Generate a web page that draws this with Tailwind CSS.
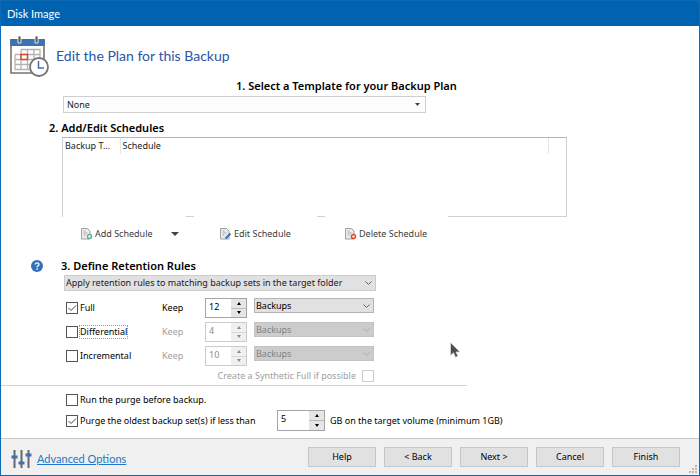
<!DOCTYPE html>
<html lang="en">
<head>
    <meta charset="UTF-8" />
    <meta name="viewport" content="width=device-width, initial-scale=1.0"/>
    <title>Disk Image</title>
    <script src="https://cdn.jsdelivr.net/npm/@tailwindcss/browser@4"></script>
</head>
<body class="min-h-screen flex flex-col bg-white border border-[#0f6ab4] font-['Noto_Sans',sans-serif] text-[9px] leading-3 text-[#1a1a1a]">

    <header class="h-[25px] px-1.5 flex items-center bg-[#0063b1] text-white font-['Lato',sans-serif] text-[11px]">Disk Image</header>

    <main class="grow pt-2">
        <div class="flex items-center gap-[7px] pl-2">
            <svg class="w-10 h-11" viewBox="0 0 40 44">
                <path d="M2 6h33v33H2z" fill="#fff" stroke="#757575" stroke-width="1.6"/>
                <path d="M1.200 5h34.600v7H1.200z" fill="#3c72b4"/>
                <path d="M9 2h3v7H9zM26 2h3v7h-3z" fill="#5c5c5c" stroke="#fff" stroke-width=".8"/>
                <path d="M12 15.500h19v15M6 20.500h25M6 20.500v15h18M6 25.500h25M6 30.500h25M12 15.500v20M18.500 15.500v20M25 15.500v15" fill="none" stroke="#b3b3b3" stroke-width="1.300"/>
                <path d="M12 20.500h6.500v5H12z" fill="#fff" stroke="#d8482c" stroke-width="1.500"/>
                <circle cx="30" cy="33" r="9" fill="#fff" stroke="#757575" stroke-width="1.800"/>
                <path d="M29.500 27v7H35" fill="none" stroke="#3c72b4" stroke-width="1.500"/>
            </svg>
            <h1 class="font-['Lato',sans-serif] text-sm leading-5 text-[#2a55a8]">Edit the Plan for this Backup</h1>
        </div>

        <!-- Template -->
        <section class="mt-0.5">
            <h2 class="pl-[235px] text-[11px] leading-3 font-semibold text-black">
                <label for="template">1. Select a Template for your Backup Plan</label>
            </h2>
            <div class="ml-[62px] mt-1 w-[363px] grid items-center">
                <select id="template" class="col-start-1 row-start-1 appearance-none h-[17px] px-[3px] border border-[#cfcfcf] bg-[#fdfdfd]">
                    <option>None</option>
                </select>
                <svg class="col-start-1 row-start-1 justify-self-end mr-1.5 w-[5px] h-[3px] pointer-events-none" viewBox="0 0 5 3"><path d="M0 0h5L2.500 3z" fill="#444"/></svg>
            </div>
        </section>

        <!-- Schedules -->
        <section class="mt-[9px]">
            <h2 class="pl-12 text-[11px] leading-3 font-semibold text-black">2. Add/Edit Schedules</h2>
            <div class="ml-[61px] mt-[3px] w-[505px] h-20 border border-[#d0d0d0] border-t-[#b4b4b4]">
                <table class="w-full table-fixed text-left">
                    <thead>
                        <tr class="h-4">
                            <th scope="col" class="w-[57px] pl-0.5 font-normal border-r border-[#e4e4e4]">Backup T...</th>
                            <th scope="col" class="pl-0.5 font-normal border-r border-[#e4e4e4]">Schedule</th>
                            <th class="w-[18px]"></th>
                        </tr>
                    </thead>
                    <tbody></tbody>
                </table>
            </div>
            <div class="ml-[62px] -mt-px flex gap-2 text-[#3c3c3c]">
                <button class="w-[123px] h-9 pl-[18px] flex items-center gap-0.5 bg-white">
                    <svg class="w-3 h-3" viewBox="0 0 12 12">
                        <path d="M.500.500h6L9 3v8H.500z" fill="#ececec" stroke="#a0a0a0"/>
                        <path d="M2.500 3h2M2.500 5h4M2.500 7h2" stroke="#aaa"/>
                        <circle cx="8.500" cy="8.500" r="2" fill="#fff" stroke="#5fae9b" stroke-width="1.500"/>
                    </svg>
                    <span>Add Schedule</span>
                    <svg class="ml-4 w-2 h-1" viewBox="0 0 8 4"><path d="M0 0h8L4 4z" fill="#444"/></svg>
                </button>
                <button class="w-[123px] h-9 pl-[26px] flex items-center gap-0.5 bg-white">
                    <svg class="w-3 h-3" viewBox="0 0 12 12">
                        <path d="M.500.500h6L9 3v8H.500z" fill="#ececec" stroke="#a0a0a0"/>
                        <path d="M2.500 3h2M2.500 5h4M2.500 7h2" stroke="#aaa"/>
                        <path d="M5.500 10.500L10.500 5.500" stroke="#3c72b4" stroke-width="2"/>
                    </svg>
                    <span>Edit Schedule</span>
                </button>
                <button class="w-[123px] h-9 pl-5 flex items-center gap-0.5 bg-white">
                    <svg class="w-3 h-3" viewBox="0 0 12 12">
                        <path d="M.500.500h6L9 3v8H.500z" fill="#ececec" stroke="#a0a0a0"/>
                        <path d="M2.500 3h2M2.500 5h4M2.500 7h2" stroke="#aaa"/>
                        <circle cx="8.500" cy="8.500" r="2" fill="#fff" stroke="#d8482c" stroke-width="1.500"/>
                    </svg>
                    <span>Delete Schedule</span>
                </button>
            </div>
        </section>

        <!-- Retention rules -->
        <section class="mt-2">
            <div class="pl-[30px] flex items-center gap-[18px]">
                <button aria-label="Help on retention rules">
                    <svg class="w-3 h-3" viewBox="0 0 12 12">
                        <circle cx="6" cy="6" r="6" fill="#3470b6"/>
                        <path d="M4.200 4.600C4.200 2.300 7.900 2.300 7.900 4.400C7.900 5.800 6.100 5.800 6.100 7.300M6.100 8.200v1.500" fill="none" stroke="#fff" stroke-width="1.400"/>
                    </svg>
                </button>
                <h2 class="text-[11px] leading-3 font-semibold text-black"><label for="scope">3. Define Retention Rules</label></h2>
            </div>
            <div class="ml-[63px] mt-[3px] w-[312px] grid items-center">
                <select id="scope" class="col-start-1 row-start-1 appearance-none h-4 px-px border border-[#cccccc] bg-[#e1e1e1]">
                    <option>Apply retention rules to matching backup sets in the target folder</option>
                </select>
                <svg class="col-start-1 row-start-1 justify-self-end mr-1 w-[7px] h-1 pointer-events-none" viewBox="0 0 7 4"><path d="M.500.500l3 3 3-3" fill="none" stroke="#666"/></svg>
            </div>

            <div class="ml-[65px] mt-[7px] grid grid-cols-[96px_43px_49px_120px] gap-y-1">
                <label class="h-5 flex items-center gap-0.5 text-black">
                    <span class="grid"><input type="checkbox" checked class="peer col-start-1 row-start-1 appearance-none w-3 h-3 border border-[#555] bg-white"><svg class="col-start-1 row-start-1 w-3 h-3 pointer-events-none invisible peer-checked:visible" viewBox="0 0 12 12"><path d="M2.500 6l2.500 2.500L10 3.500" fill="none" stroke="#444"/></svg></span>
                    Full
                </label>
                <label for="keep-full" class="self-center text-black">Keep</label>
                <div class="w-[42px] h-5 flex border border-[#a5a5a5] text-black">
                    <input id="keep-full" type="text" inputmode="numeric" value="12" class="w-6 h-4 grow pl-[3px] leading-4">
                    <div class="w-[15px] flex flex-col bg-[#e6e6e6]">
                        <button aria-label="More" class="grow grid place-items-center border-b border-[#bbb]"><svg class="w-1 h-[3px]" viewBox="0 0 4 3"><path d="M0 3h4L2 0z"/></svg></button>
                        <button aria-label="Fewer" class="grow grid place-items-center"><svg class="w-1 h-[3px]" viewBox="0 0 4 3"><path d="M0 0h4L2 3z"/></svg></button>
                    </div>
                </div>
                <div class="grid items-center self-start">
                    <select aria-label="Unit for full backups" class="col-start-1 row-start-1 appearance-none h-[15px] px-px border border-[#b4b4b4] bg-[#e1e1e1] text-black"><option>Backups</option></select>
                    <svg class="col-start-1 row-start-1 justify-self-end mr-1 w-[7px] h-1 pointer-events-none" viewBox="0 0 7 4"><path d="M.500.500l3 3 3-3" fill="none" stroke="#666"/></svg>
                </div>

                <label class="h-5 flex items-center gap-px text-black">
                    <input type="checkbox" class="appearance-none w-3 h-3 border border-[#555] bg-white">
                    <span class="border border-dotted border-[#999]">Differential</span>
                </label>
                <label for="keep-diff" class="self-center text-[#a0a0a0]">Keep</label>
                <div class="w-[42px] h-5 flex border border-[#cccccc] text-[#8a8a8a]">
                    <input id="keep-diff" type="text" inputmode="numeric" value="4" disabled class="w-6 h-4 grow pl-[3px] leading-4">
                    <div class="w-[15px] flex flex-col bg-[#f0f0f0] fill-[#888]">
                        <button disabled aria-label="More" class="grow grid place-items-center border-b border-[#d5d5d5]"><svg class="w-1 h-[3px]" viewBox="0 0 4 3"><path d="M0 3h4L2 0z"/></svg></button>
                        <button disabled aria-label="Fewer" class="grow grid place-items-center"><svg class="w-1 h-[3px]" viewBox="0 0 4 3"><path d="M0 0h4L2 3z"/></svg></button>
                    </div>
                </div>
                <div class="grid items-center self-start">
                    <select disabled aria-label="Unit for differential backups" class="col-start-1 row-start-1 appearance-none h-[15px] px-px opacity-100 border border-[#c3c3c3] bg-[#cccccc] text-[#838383]"><option>Backups</option></select>
                    <svg class="col-start-1 row-start-1 justify-self-end mr-1 w-[7px] h-1 pointer-events-none" viewBox="0 0 7 4"><path d="M.500.500l3 3 3-3" fill="none" stroke="#aaa"/></svg>
                </div>

                <label class="h-5 flex items-center gap-0.5 text-black">
                    <input type="checkbox" class="appearance-none w-3 h-3 border border-[#555] bg-white">
                    Incremental
                </label>
                <label for="keep-inc" class="self-center text-[#a0a0a0]">Keep</label>
                <div class="w-[42px] h-5 flex border border-[#cccccc] text-[#8a8a8a]">
                    <input id="keep-inc" type="text" inputmode="numeric" value="10" disabled class="w-6 h-4 grow pl-[3px] leading-4">
                    <div class="w-[15px] flex flex-col bg-[#f0f0f0] fill-[#888]">
                        <button disabled aria-label="More" class="grow grid place-items-center border-b border-[#d5d5d5]"><svg class="w-1 h-[3px]" viewBox="0 0 4 3"><path d="M0 3h4L2 0z"/></svg></button>
                        <button disabled aria-label="Fewer" class="grow grid place-items-center"><svg class="w-1 h-[3px]" viewBox="0 0 4 3"><path d="M0 0h4L2 3z"/></svg></button>
                    </div>
                </div>
                <div class="grid items-center self-start">
                    <select disabled aria-label="Unit for incremental backups" class="col-start-1 row-start-1 appearance-none h-[15px] px-px opacity-100 border border-[#c3c3c3] bg-[#cccccc] text-[#838383]"><option>Backups</option></select>
                    <svg class="col-start-1 row-start-1 justify-self-end mr-1 w-[7px] h-1 pointer-events-none" viewBox="0 0 7 4"><path d="M.500.500l3 3 3-3" fill="none" stroke="#aaa"/></svg>
                </div>
            </div>

            <label class="w-[373px] mt-1 flex items-center justify-end gap-1.5 text-[#a0a0a0]">
                Create a Synthetic Full if possible
                <input type="checkbox" disabled class="appearance-none w-3 h-3 border border-[#cccccc] bg-white">
            </label>
            <hr class="mt-[3px] w-[466px] border-[#d4d4d4]">
        </section>

        <!-- Purge -->
        <section class="pl-[65px] pt-2 text-black">
            <label class="flex items-center gap-0.5">
                <input type="checkbox" class="appearance-none w-3 h-3 border border-[#555] bg-white">
                Run the purge before backup.
            </label>
            <div class="mt-1 flex items-center">
                <label class="w-[211px] flex items-center gap-0.5">
                    <span class="grid"><input type="checkbox" checked class="peer col-start-1 row-start-1 appearance-none w-3 h-3 border border-[#555] bg-white"><svg class="col-start-1 row-start-1 w-3 h-3 pointer-events-none invisible peer-checked:visible" viewBox="0 0 12 12"><path d="M2.500 6l2.500 2.500L10 3.500" fill="none" stroke="#444"/></svg></span>
                    Purge the oldest backup set(s) if less than
                </label>
                <div class="w-12 h-[21px] flex border border-[#a5a5a5]">
                    <input id="min-free" type="text" inputmode="numeric" value="5" class="w-7 h-4 grow pl-[3px] leading-4">
                    <div class="w-[15px] flex flex-col bg-[#e6e6e6]">
                        <button aria-label="More" class="grow grid place-items-center border-b border-[#bbb]"><svg class="w-1 h-[3px]" viewBox="0 0 4 3"><path d="M0 3h4L2 0z"/></svg></button>
                        <button aria-label="Fewer" class="grow grid place-items-center"><svg class="w-1 h-[3px]" viewBox="0 0 4 3"><path d="M0 0h4L2 3z"/></svg></button>
                    </div>
                </div>
                <label for="min-free" class="ml-[5px]">GB on the target volume (minimum 1GB)</label>
            </div>
        </section>
    </main>

    <footer class="relative h-[37px] pl-2.5 pr-[19px] flex items-center justify-between bg-[#f0f0f0] border-t border-[#c8c8c8] text-black">
        <a href="#" class="flex items-center gap-[5px] pt-1 font-['Lato',sans-serif] text-[11px] leading-4 text-[#2277c8] underline">
            <svg class="w-[21px] h-5" viewBox="0 0 21 20">
                <path d="M3.500 1v18M10.500 1v18M17.500 1v18" stroke="#666" stroke-width="2"/>
                <path d="M.500 8h6M7.500 14h6M14.500 6h6" stroke="#3c72b4" stroke-width="3"/>
            </svg>
            Advanced Options
        </a>
        <div class="flex gap-2">
            <button class="w-[68px] h-5 bg-[#e1e1e1] border border-[#c6c6c6]">Help</button>
            <button class="w-[68px] h-5 bg-[#e1e1e1] border border-[#c6c6c6]">&lt; Back</button>
            <button class="w-[68px] h-5 bg-[#e1e1e1] border border-[#c6c6c6]">Next &gt;</button>
            <button class="w-[68px] h-5 bg-[#e1e1e1] border border-[#c6c6c6]">Cancel</button>
            <button class="w-[68px] h-5 bg-[#e1e1e1] border border-[#c6c6c6]">Finish</button>
        </div>
        <svg class="absolute right-0.5 bottom-0.5 w-2 h-2" viewBox="0 0 8 8" fill="#bbb"><path d="M6 0h2v2H6zM3 3h2v2H3zM6 3h2v2H6zM0 6h2v2H0zM3 6h2v2H3zM6 6h2v2H6z"/></svg>
    </footer>

    <!-- Mouse pointer -->
    <svg class="absolute left-[450px] top-[342px] w-3 h-4 pointer-events-none" viewBox="0 0 12 16"><path d="M.500.500v13l3-2.700 2 4.500 2.500-1-2-4.300h4z" fill="#4a4f55" stroke="#ddd" stroke-width=".8"/></svg>

</body>
</html>
